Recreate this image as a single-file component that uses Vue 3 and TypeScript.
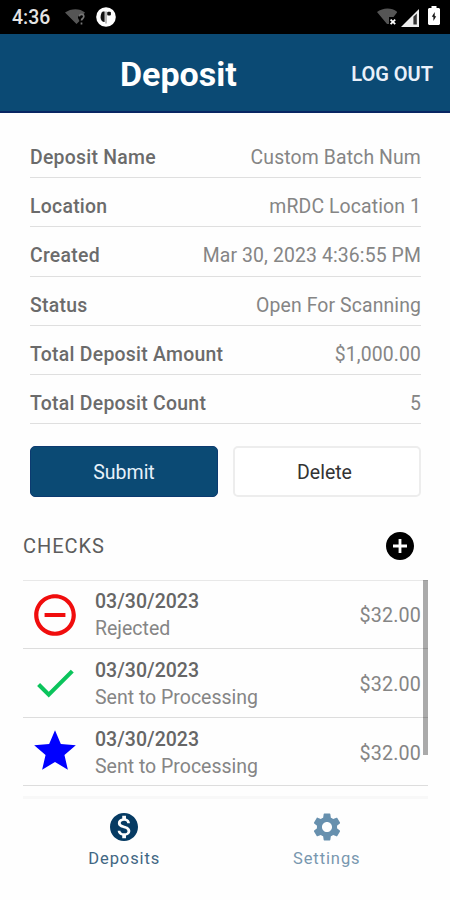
<script setup lang="ts">
interface Detail { label: string; value: string }
interface Check { date: string; status: string; amount: string; icon: string; color: string }

const details: Detail[] = [
  { label: 'Deposit Name', value: 'Custom Batch Num' },
  { label: 'Location', value: 'mRDC Location 1' },
  { label: 'Created', value: 'Mar 30, 2023 4:36:55 PM' },
  { label: 'Status', value: 'Open For Scanning' },
  { label: 'Total Deposit Amount', value: '$1,000.00' },
  { label: 'Total Deposit Count', value: '5' },
]

const rejected = 'M7 11v2h10v-2H7zm5-9C6.48 2 2 6.48 2 12s4.48 10 10 10 10-4.48 10-10S17.52 2 12 2zm0 18c-4.41 0-8-3.59-8-8s3.59-8 8-8 8 3.59 8 8-3.59 8-8 8z'
const done = 'M9 16.17L4.83 12l-1.42 1.41L9 19 21 7l-1.41-1.41z'
const star = 'M12 17.27L18.18 21l-1.64-7.03L22 9.24l-7.19-.61L12 2 9.19 8.63 2 9.24l5.46 4.73L5.82 21z'

const checks: Check[] = [
  { date: '03/30/2023', status: 'Rejected', amount: '$32.00', icon: rejected, color: 'red' },
  { date: '03/30/2023', status: 'Sent to Processing', amount: '$32.00', icon: done, color: 'green' },
  { date: '03/30/2023', status: 'Sent to Processing', amount: '$32.00', icon: star, color: 'blue' },
]
</script>

<template>
  <div class="screen">
    <div class="statusbar">
      <span class="clock">4:36</span>
      <svg class="wifi-unknown" viewBox="0 0 22 18">
        <path d="M0 4.5C6 0 15 0 20 4.5L18.5 6.5c-3-1.5-6 .5-5.5 3.5l1.5 3-3 3z" fill="#555" />
        <path d="M14.2 8.4c.3-2.6 4.6-2.6 4.6.1 0 2-2.3 2-2.3 4M16.5 14.5v2" fill="none" stroke="#777" stroke-width="1.7" />
      </svg>
      <svg class="app-badge" viewBox="0 0 20 20">
        <circle cx="10" cy="10" r="9.8" fill="#fff" />
        <path d="M8.6 4.5H6.8C5.2 5.5 4.6 8 4.6 10.5c0 2.6 1.6 4.6 4 4.6z" fill="#111" />
        <rect x="11.2" y="4.7" width="3.7" height="3.8" rx="1" fill="#111" />
        <path d="M10 4.5v12" stroke="#777" stroke-width="1" />
      </svg>
      <span class="spacer"></span>
      <svg class="wifi-off" viewBox="0 0 20 18">
        <path d="M0 4C6-.8 15-.8 20.4 4L16.5 9H12v7L10 16z" fill="#555" />
        <path d="M13.6 11.6l4.6 4.6m0-4.6l-4.6 4.6" stroke="#fff" stroke-width="1.8" />
      </svg>
      <svg class="signal" viewBox="0 0 18 18">
        <path d="M0 18L18 0v18z" fill="#eee" />
        <path d="M12.4 7.8l3.4-3.3v11h-3.4z" fill="#333" />
      </svg>
      <svg class="battery" viewBox="0 0 12 19">
        <path d="M1 2h2.5V0h5v2H11l1 1v15l-1 1H1l-1-1V3z" fill="#fff" />
        <path d="M6.7 6L3.8 10.8h1.6V15l2.8-4.8H6.7z" fill="#111" />
      </svg>
    </div>

    <header class="header">
      <span class="header-side"></span>
      <h1 class="title">Deposit</h1>
      <span class="header-side logout"><span class="logout-text">LOG OUT</span></span>
    </header>

    <main class="body">
      <section class="details">
        <div v-for="d in details" :key="d.label" class="detail">
          <span class="label">{{ d.label }}</span>
          <span class="value">{{ d.value }}</span>
        </div>
      </section>

      <div class="actions">
        <button class="btn primary">Submit</button>
        <button class="btn">Delete</button>
      </div>

      <div class="section-head">
        <span class="section-title">CHECKS</span>
        <svg class="add" viewBox="2 2 20 20">
          <path d="M12 2C6.48 2 2 6.48 2 12s4.48 10 10 10 10-4.48 10-10S17.52 2 12 2zm5 11h-4v4h-2v-4H7v-2h4V7h2v4h4v2z" />
        </svg>
      </div>

      <section class="checks">
        <div v-for="(c, i) in checks" :key="i" class="check">
          <svg class="check-icon" :class="c.color" viewBox="0 0 24 24"><path :d="c.icon" /></svg>
          <div class="check-text">
            <span class="date">{{ c.date }}</span>
            <span class="state">{{ c.status }}</span>
          </div>
          <span class="price">{{ c.amount }}</span>
        </div>
        <div class="scrollbar"></div>
      </section>
    </main>

    <nav class="tabs">
      <div class="tab active">
        <svg class="tab-icon" viewBox="2 2 20 20">
          <path d="M12 2C6.48 2 2 6.48 2 12s4.48 10 10 10 10-4.48 10-10S17.52 2 12 2zm1.41 16.09V20h-2.67v-1.93c-1.71-.36-3.16-1.46-3.27-3.4h1.96c.1 1.05.82 1.87 2.65 1.87 1.96 0 2.4-.98 2.4-1.59 0-.83-.44-1.61-2.67-2.14-2.48-.6-4.18-1.62-4.18-3.67 0-1.72 1.39-2.84 3.11-3.21V4h2.67v1.95c1.86.45 2.79 1.86 2.85 3.39H14.3c-.05-1.11-.64-1.87-2.22-1.87-1.5 0-2.4.68-2.4 1.64 0 .84.65 1.39 2.67 1.91s4.18 1.39 4.18 3.91c-.01 1.83-1.38 2.83-3.12 3.16z" />
        </svg>
        <span class="tab-label">Deposits</span>
      </div>
      <div class="tab">
        <svg class="tab-icon" viewBox="2 2 20 20">
          <path d="M19.14 12.94c.04-.3.06-.61.06-.94 0-.32-.02-.64-.07-.94l2.03-1.58c.18-.14.23-.41.12-.61l-1.92-3.32c-.12-.22-.37-.29-.59-.22l-2.39.96c-.5-.38-1.03-.7-1.62-.94l-.36-2.54c-.04-.24-.24-.41-.48-.41h-3.84c-.24 0-.43.17-.47.41l-.36 2.54c-.59.24-1.13.57-1.62.94l-2.39-.96c-.22-.08-.47 0-.59.22L2.74 8.87c-.12.21-.08.47.12.61l2.03 1.58c-.05.3-.09.63-.09.94s.02.64.07.94l-2.03 1.58c-.18.14-.23.41-.12.61l1.92 3.32c.12.22.37.29.59.22l2.39-.96c.5.38 1.03.7 1.62.94l.36 2.54c.05.24.24.41.48.41h3.84c.24 0 .44-.17.47-.41l.36-2.54c.59-.24 1.13-.56 1.62-.94l2.39.96c.22.08.47 0 .59-.22l1.92-3.32c.12-.22.07-.47-.12-.61l-2.01-1.58zM12 15.6c-1.98 0-3.6-1.62-3.6-3.6s1.62-3.6 3.6-3.6 3.6 1.62 3.6 3.6-1.62 3.6-3.6 3.6z" />
        </svg>
        <span class="tab-label">Settings</span>
      </div>
    </nav>
  </div>
</template>

<style>
body { background: #fff; }
</style>

<style scoped>
.screen {
  width: 450px; height: 900px; overflow: hidden; box-sizing: border-box;
  display: flex; flex-direction: column;
  background: #fefefe; font-family: Roboto, "Liberation Sans", sans-serif; color: #6f6f6f;
}
svg { display: block; flex: none; }
.statusbar { height: 34px; flex: none; display: flex; align-items: center; background: #000; padding: 0 10px 0 12px; }
.clock { width: 38px; font-size: 19.4px; font-weight: 500; color: #e4e4e4; line-height: 34px; padding-top: 1px; margin-right: 15px; }
.wifi-unknown { width: 22px; height: 18px; }
.app-badge { width: 20px; height: 20px; margin-left: 9px; }
.spacer { flex: 1; }
.wifi-off { width: 20px; height: 18px; margin-right: 4px; }
.signal { width: 18px; height: 18px; margin: 1px 9px 0 0; }
.battery { width: 12px; height: 19px; margin-bottom: 3px; }

.header { height: 79px; flex: none; box-sizing: border-box; display: flex; align-items: center; background: #0b4a74; border-bottom: 2px solid #082663; }
.header-side { flex: 1; }
.title { margin: 0; width: 118px; font-size: 34px; font-weight: 700; line-height: 40px; color: #fff; padding: 3px 27px 0 0; white-space: nowrap; }
.header-side:first-child { flex: 0 0 120px; }
.logout { display: flex; justify-content: flex-end; padding: 3px 17px 0 0; }
.logout-text { font-size: 20px; font-weight: 600; color: #e9f0fa; white-space: nowrap; }

.body { height: 687px; flex: none; box-sizing: border-box; padding: 16px 22px 0 23px; overflow: hidden; }
.details { margin: 0 7px; }
.detail { height: 49.2px; box-sizing: border-box; display: flex; justify-content: space-between; align-items: center; border-bottom: 1.5px solid #dfdfdf; padding-top: 9px; font-size: 19.4px; white-space: nowrap; }
.label { font-size: 19.4px; font-weight: 500; letter-spacing: .27px; color: #6b6b6b; }
.value { letter-spacing: .12px; color: #858585; }
.actions { display: grid; grid-template-columns: 188px 188px; justify-content: space-between; margin: 22px 7px 0; }
.btn { height: 51px; box-sizing: border-box; padding: 2px 0 0; border: 2px solid #ededed; border-radius: 5px; background: #fff; color: #333; font: 400 19.5px/45px Roboto, sans-serif; }
.btn:last-child { padding-right: 5px; }
.primary { background: #0b4a74; border: 1px solid #0c3a70; color: #e6f1fa; }
.section-head { display: flex; justify-content: space-between; align-items: center; height: 28px; margin: 35px 14px 0 0; }
.section-title { font-size: 20px; letter-spacing: .95px; color: #5c5c5c; }
.add { width: 28px; height: 28px; fill: #000; }
.checks { position: relative; margin-top: 20px; height: 219px; border-top: 1px solid #e8e8e8; box-sizing: border-box; border-bottom: 3px solid #f8f8f8; }
.check { height: 68.5px; box-sizing: border-box; display: flex; align-items: center; border-bottom: 1.5px solid #ddd; padding-right: 7px; }
.check:first-child { height: 68px; }
.check-icon { width: 50px; height: 50px; margin: 0 15px 0 7px; }
.red { fill: #f00d0d; }
.green { fill: #0bc45c; }
.blue { fill: #00f; }
.check-text { flex: 1; display: flex; flex-direction: column; font-size: 19.5px; line-height: 27px; padding-top: 3px; }
.check:first-child .check-text { padding-top: 1px; }
.date { font-weight: 500; letter-spacing: .02px; color: #666; }
.state { color: #858585; }
.price { font-size: 19.7px; letter-spacing: .15px; color: #858585; padding-top: 4px; }
.check:first-child .price { padding-top: 2px; }
.scrollbar { position: absolute; right: 0; top: -1px; width: 5px; height: 175px; background: rgba(0, 0, 0, .33); }

.tabs { display: flex; padding: 13px 22px 0 23px; }
.tab { flex: 1; display: flex; flex-direction: column; align-items: center; color: #7897af; fill: #6790ae; }
.active { color: #416683; fill: #063b63; }
.tab-icon { width: 28px; height: 28px; }
.tab-label { margin-top: 7px; font-size: 16.5px; line-height: 22px; letter-spacing: .9px; }
</style>
